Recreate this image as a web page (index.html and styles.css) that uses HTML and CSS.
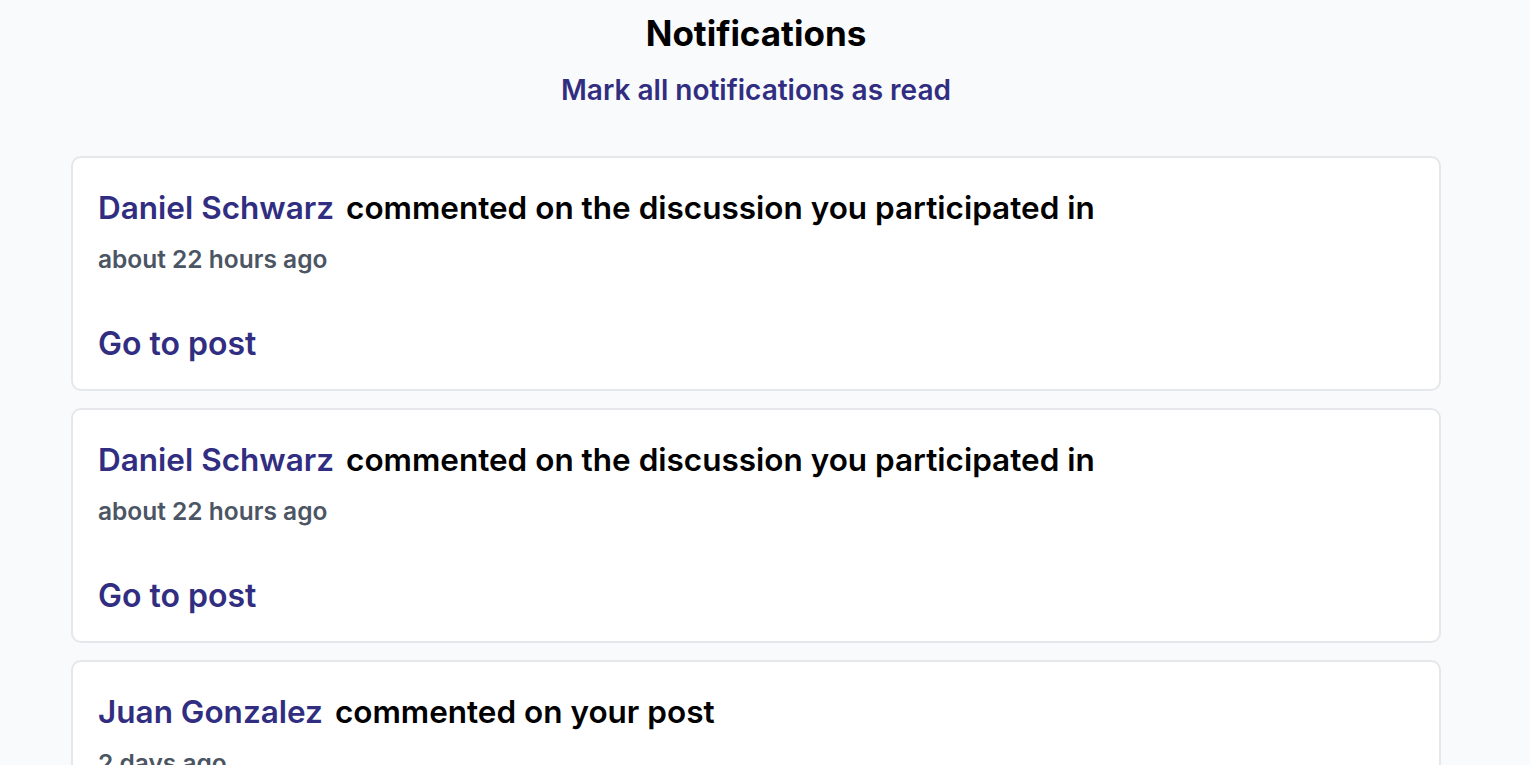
FILE: index.html
```html
<!DOCTYPE html>
<html>
<head>
<meta charset="utf-8">
<link rel="stylesheet" href="styles.css">
</head>
<body>
<div class="page">
  <header class="head">
    <h1 class="title">Notifications</h1>
    <a class="mark" href="#">Mark all notifications as read</a>
  </header>
  <ul class="list">
    <li class="card">
      <p class="line"><a class="name" href="#">Daniel Schwarz</a> <span class="action">commented on the discussion you participated in</span></p>
      <p class="time">about 22 hours ago</p>
      <a class="go" href="#">Go to post</a>
    </li>
    <li class="card">
      <p class="line"><a class="name" href="#">Daniel Schwarz</a> <span class="action">commented on the discussion you participated in</span></p>
      <p class="time">about 22 hours ago</p>
      <a class="go" href="#">Go to post</a>
    </li>
    <li class="card">
      <p class="line"><a class="name" href="#">Juan Gonzalez</a> <span class="action">commented on your post</span></p>
      <p class="time">2 days ago</p>
      <a class="go" href="#">Go to post</a>
    </li>
  </ul>
</div>
</body>
</html>
```
FILE: styles.css
```css
* { box-sizing: border-box; }
html, body { margin: 0; padding: 0; }
body {
  background: #f9fafb;
  font-family: Inter, "Noto Sans", sans-serif;
  color: #000;
}
.page {
  width: 1512px;
  padding: 0 71px;
}
.head {
  display: flex;
  flex-direction: column;
  align-items: center;
  padding-top: 12px;
}
.title {
  margin: 0;
  font-size: 35px;
  font-weight: 700;
  line-height: 42px;
}
.mark {
  margin-top: 19px;
  font-size: 28px;
  font-weight: 600;
  line-height: 34px;
  color: #312e81;
  text-decoration: none;
}
.list {
  list-style: none;
  margin: 49px 0 0;
  padding: 0;
  display: flex;
  flex-direction: column;
  gap: 17px;
}
.card {
  background: #fff;
  border: 2px solid #e5e7eb;
  border-radius: 10px;
  padding: 30px 25px 25px;
  height: 235px;
  display: flex;
  flex-direction: column;
  align-items: flex-start;
}
.line {
  margin: 0;
  font-size: 31.5px;
  font-weight: 600;
  line-height: 40px;
}
.name { color: #312e81; text-decoration: none; margin-right: 4px; }
.time {
  margin: 16px 0 0;
  font-size: 24.5px;
  font-weight: 600;
  line-height: 30px;
  color: #4b5563;
}
.go {
  margin-top: auto;
  font-size: 32px;
  font-weight: 600;
  line-height: 40px;
  color: #312e81;
  text-decoration: none;
}
```
